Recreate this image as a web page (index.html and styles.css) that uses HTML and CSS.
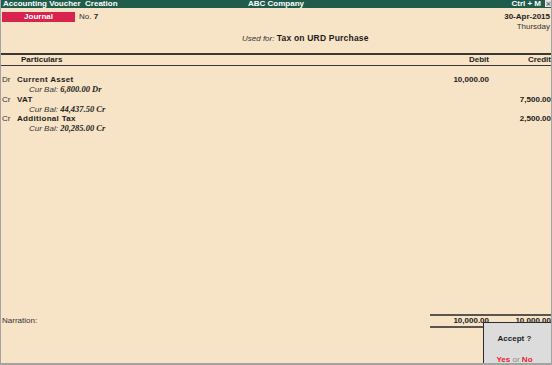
FILE: index.html
```html
<!DOCTYPE html>
<html lang="en">
<head>
    <meta charset="UTF-8">
    <title>Accounting Voucher Creation</title>
    <link rel="stylesheet" href="styles.css">
</head>
<body>
    <div class="window">
        <header class="titlebar">
            <span class="title-left">Accounting Voucher&nbsp; Creation</span>
            <span class="title-center">ABC Company</span>
            <span class="title-right">Ctrl + M <span class="close-box"><svg width="6" height="6" viewBox="0 0 6 6"><path d="M1 1L5 5M5 1L1 5" stroke="#333" stroke-width="1"/></svg></span></span>
        </header>

        <div class="head">
            <div class="head-top">
                <div class="voucher-type">
                    <span class="badge">Journal</span>
                    <span class="vno">No. <b>7</b></span>
                </div>
                <div class="date">
                    <div class="date-val">30-Apr-2015</div>
                    <div class="day">Thursday</div>
                </div>
            </div>
            <div class="used-for"><i>Used for:</i> <b>Tax on URD Purchase</b></div>
        </div>

        <div class="grid table-head">
            <div class="col-part">Particulars</div>
            <div class="col-num">Debit</div>
            <div class="col-num">Credit</div>
        </div>

        <div class="entries">
            <div class="entry">
                <div class="grid line">
                    <div><span class="drcr">Dr</span><b>Current Asset</b></div>
                    <div class="col-num amount">10,000.00</div>
                    <div class="col-num amount"></div>
                </div>
                <div class="curbal"><i>Cur Bal:</i> <span class="bal">6,800.00 Dr</span></div>
            </div>
            <div class="entry">
                <div class="grid line">
                    <div><span class="drcr">Cr</span><b>VAT</b></div>
                    <div class="col-num amount"></div>
                    <div class="col-num amount">7,500.00</div>
                </div>
                <div class="curbal"><i>Cur Bal:</i> <span class="bal">44,437.50 Cr</span></div>
            </div>
            <div class="entry">
                <div class="grid line">
                    <div><span class="drcr">Cr</span><b>Additional Tax</b></div>
                    <div class="col-num amount"></div>
                    <div class="col-num amount">2,500.00</div>
                </div>
                <div class="curbal"><i>Cur Bal:</i> <span class="bal">20,285.00 Cr</span></div>
            </div>
        </div>

        <div class="grid footer">
            <div class="narration">Narration:</div>
            <div class="col-num total">10,000.00</div>
            <div class="col-num total">10,000.00</div>
        </div>

        <div class="accept-box">
            <div class="accept-q">Accept ?</div>
            <div class="accept-a"><span class="yes">Yes</span> <span class="or">or</span> <span class="no">No</span></div>
        </div>
    </div>
</body>
</html>
```

FILE: styles.css
```css
body {
    margin: 0;
    padding: 0;
    font-family: "Liberation Sans", Arial, sans-serif;
    font-size: 8px;
    color: #1c1c1c;
    background-color: #f7e3c6;
    overflow: hidden;
}

.window {
    position: relative;
    width: 552px;
    height: 365px;
    box-sizing: border-box;
    border-left: 1px solid #a3a3a3;
    border-right: 1px solid #a3a3a3;
    border-bottom: 2px solid #a3a3a3;
    display: flex;
    flex-direction: column;
    overflow: hidden;
}

.titlebar {
    height: 8px;
    line-height: 8px;
    background-color: #1f5c4b;
    color: white;
    font-weight: bold;
    display: grid;
    grid-template-columns: 1fr auto 1fr;
    margin-left: -1px;
    margin-right: -1px;
}

.title-left {
    padding-left: 3px;
}

.title-right {
    text-align: right;
    display: flex;
    justify-content: flex-end;
    align-items: flex-start;
}

.close-box {
    display: inline-flex;
    align-items: center;
    justify-content: center;
    width: 7px;
    height: 7px;
    margin-left: 4px;
    background-color: #d6d6d6;
    border: 1px solid #e8e8e8;
    box-sizing: border-box;
}

.head {
    padding: 4px 0 0 1px;
    height: 45px;
    box-sizing: border-box;
}

.head-top {
    display: flex;
    justify-content: space-between;
}

.voucher-type {
    display: flex;
    height: 10px;
    line-height: 10px;
}

.badge {
    width: 73px;
    background-color: #d8234f;
    color: white;
    font-weight: bold;
    text-align: center;
}

.vno {
    margin-left: 4px;
    color: #333;
}

.vno b {
    color: #1c1c1c;
}

.date {
    text-align: right;
    line-height: 10px;
    padding-right: 1px;
}

.date-val {
    font-weight: bold;
}

.day {
    color: #333;
}

.used-for {
    line-height: 10px;
    margin-top: 1px;
    padding-left: 240px;
}

.used-for i {
    color: #333;
}

.used-for b {
    font-size: 8.5px;
    letter-spacing: 0.2px;
}

.grid {
    display: grid;
    grid-template-columns: 1fr 59px 62px;
}

.col-num {
    text-align: right;
}

.table-head {
    border-top: 2px solid #3b3833;
    border-bottom: 1px solid #3b3833;
    height: 10px;
    line-height: 10px;
    font-weight: bold;
}

.col-part {
    padding-left: 20px;
}

.entries {
    flex: 1;
    padding-top: 9px;
}

.line {
    height: 10px;
    line-height: 10px;
}

.line b {
    letter-spacing: 0.3px;
}

.drcr {
    display: inline-block;
    width: 15px;
    padding-left: 1px;
    color: #333;
}

.amount {
    font-weight: bold;
}

.curbal {
    height: 9.5px;
    line-height: 9.5px;
    padding-left: 28px;
}

.curbal i {
    color: #333;
}

.bal {
    font-family: "Liberation Serif", "Times New Roman", serif;
    font-weight: bold;
    font-style: italic;
    font-size: 8.5px;
}

.footer {
    height: 49px;
    line-height: 10px;
}

.narration {
    padding-top: 2px;
    padding-left: 1px;
    color: #333;
}

.total {
    font-weight: bold;
    height: 10px;
    border-top: 2px solid #5a554e;
    border-bottom: 2px solid #5a554e;
}

.accept-box {
    position: absolute;
    left: 482px;
    top: 322px;
    width: 72px;
    height: 44px;
    background-color: #dcdcdc;
    border-left: 1px solid #2b2b2b;
    border-top: 1px solid #2b2b2b;
    text-align: center;
    padding-right: 10px;
    box-sizing: border-box;
    line-height: 10px;
}

.accept-q {
    margin-top: 11px;
    font-weight: bold;
}

.accept-a {
    margin-top: 11px;
    font-weight: bold;
}

.yes, .no {
    color: #e8222b;
}

.or {
    color: #8a8a8a;
    font-weight: normal;
}
```
